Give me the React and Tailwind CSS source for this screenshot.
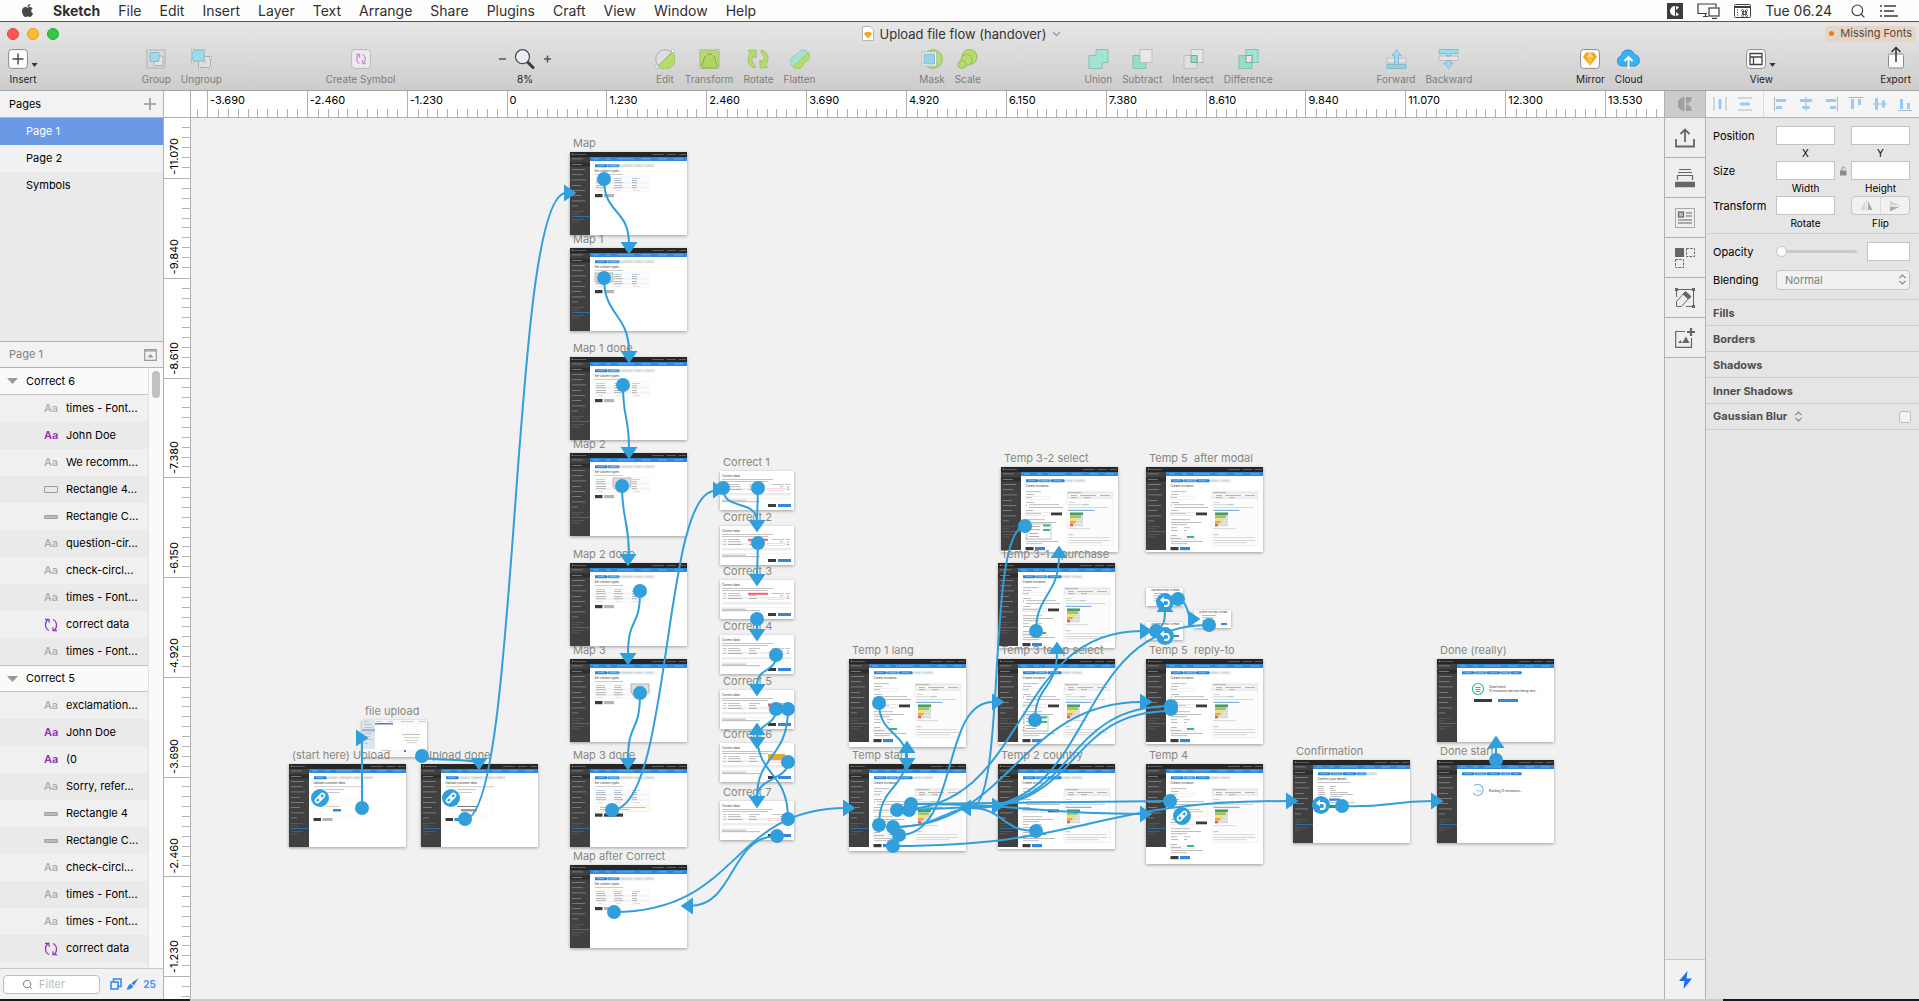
import React from "react";
import { Search } from "lucide-react";
import { FaApple } from "react-icons/fa";

const BLUE = "#319fdb";

/* ---------- menu bar ---------- */

const MENUS = ["File", "Edit", "Insert", "Layer", "Text", "Arrange", "Share", "Plugins", "Craft", "View", "Window", "Help"];

function MenuBar() {
  return (
    <header className="flex h-[22px] shrink-0 items-center justify-between border-b border-[#70454d] bg-[#fdfdfd] px-5 text-[14px] leading-5 text-[#2f2f2f]">
      <nav className="flex items-center gap-[18px]">
        <button aria-label="Apple menu"><FaApple size={15} color="#474747" /></button>
        <button className="font-bold">Sketch</button>
        {MENUS.map((m) => <button key={m}>{m}</button>)}
      </nav>
      <div className="flex items-center gap-3.5">
        <svg width="16" height="16" viewBox="0 0 16 16"><rect width="16" height="16" fill="#3d3d3d" /><path d="M8 3A5 5 0 0 0 8 13zM9 3a5 5 0 0 1 3 1.5L9 7zM9 13a5 5 0 0 0 3-1.5L9 9z" fill="#fff" /></svg>
        <svg width="23" height="16" viewBox="0 0 23 16" fill="none" stroke="#3d3d3d" strokeWidth="1.2"><path d="M10 10.500H1V1h18v3M6 13.500h5M8.500 10.500v3" /><rect x="12" y="5" width="10" height="8" fill="#fff" /><path d="M15 15.400h5" /></svg>
        <svg width="17" height="16" viewBox="0 0 17 16" fill="none" stroke="#3d3d3d"><rect x=".5" y="1.500" width="16" height="13" rx="1" /><path d="M.5 4h16" strokeWidth="2" /><path d="M3 7h2M3 9.500h2M3 12h2" strokeDasharray="1 1" /><path d="M8.500 8.500h4v3h-4zM8.500 8.500a1 1 0 1 1 1-1v5a1 1 0 1 1-1-1M12.500 8.500a1 1 0 1 0-1-1v5a1 1 0 1 0 1-1" strokeWidth=".8" /></svg>
        <span>Tue 06.24</span>
        <button aria-label="Search" className="pl-1"><Search size={16} strokeWidth={1.700} color="#3d3d3d" /></button>
        <svg width="19" height="14" viewBox="0 0 19 14" stroke="#3d3d3d" strokeWidth="1.600"><path d="M0 2h2M0 7h2M0 12h2M4 2h12M4 7h10M4 12h14" /></svg>
      </div>
    </header>
  );
}

/* ---------- toolbar ---------- */

const icon = {
  insert: <svg width="30" height="20" viewBox="0 0 30 20"><rect x=".6" y=".6" width="18.800" height="18.800" rx="3" fill="#fdfdfd" stroke="#8b8b8b" /><path d="M10 4.500v11M4.500 10h11" stroke="#444" strokeWidth="1.400" /><path d="M23.500 14h6l-3 4z" fill="#333" /></svg>,
  group: <svg width="20" height="20" viewBox="0 0 20 20"><rect x="1" y="1" width="18" height="18" fill="none" stroke="#b0b0b0" /><rect x="8" y="7" width="9" height="9.500" rx="1" fill="#e3e3e3" stroke="#b0b0b0" /><rect x="4" y="3.500" width="9" height="9" rx="1" fill="#9cdcea" stroke="#84b9c8" />{[0, 17].flatMap((x) => [0, 17].map((y) => <rect key={x + "-" + y} x={x + .5} y={y + .5} width="2" height="2" fill="#fff" stroke="#aaa" strokeWidth=".6" />))}</svg>,
  ungroup: <svg width="21" height="20" viewBox="0 0 21 20"><rect x="7.500" y="7.500" width="12" height="11" fill="#e0e0e0" stroke="#b0b0b0" /><rect x="1" y="1" width="12" height="11" fill="#9cdcea" stroke="#84b9c8" />{[[0, 0], [12, 0], [0, 11], [12, 11], [18, 7], [18, 17.500], [7, 17.500]].map(([x, y]) => <rect key={x + "-" + y} x={x + .3} y={y + .3} width="2" height="2" fill="#fff" stroke="#aaa" strokeWidth=".6" />)}</svg>,
  symbol: <svg width="20" height="20" viewBox="0 0 20 20"><rect x=".6" y=".6" width="18.800" height="18.800" rx="3" fill="#ebebeb" stroke="#b9b9b9" /><path d="M8.500 14.500C5.500 13.500 4.500 8.500 7.500 6M5 5.500h3.500V9M11.500 5.500c3 1 4 6 1 8.500M15 14.500h-3.500V11" fill="none" stroke="#d58ae0" strokeWidth="1.300" /></svg>,
  edit: <svg width="20" height="20" viewBox="0 0 20 20"><circle cx="10" cy="10" r="9.300" fill="#dedede" stroke="#aeaeae" /><path d="M17.500 3.500A9.500 9.500 0 1 1 3 17z" fill="#b6dc6a" stroke="#98bb59" strokeWidth=".7" /><path d="M2 18 17.500 2.500" stroke="#aaa" /><rect x="16.500" y=".8" width="2.500" height="2.500" fill="#fff" stroke="#aaa" strokeWidth=".6" /><rect x=".8" y="16.500" width="2.500" height="2.500" fill="#fff" stroke="#aaa" strokeWidth=".6" /></svg>,
  transform: <svg width="21" height="20" viewBox="0 0 21 20"><rect x="1" y="1" width="19" height="18" fill="#b6dc6a" stroke="#a5b887" /><path d="M2 19 6.500 5h8L19 19z" fill="#afd65f" stroke="#8aa35c" />{[[0, 0], [18.500, 0], [0, 17.500], [18.500, 17.500], [5, 4], [13.500, 4]].map(([x, y]) => <rect key={x + "-" + y} x={x + .3} y={y + .3} width="2" height="2" fill="#fff" stroke="#aaa" strokeWidth=".6" />)}</svg>,
  rotate: <svg width="24" height="20" viewBox="0 0 24 20" fill="#b6dc6a" stroke="#9ab95c" strokeWidth=".8"><path d="M10 1v8L7.500 7c-2.500 3-2 6 1.500 9.500V19C1 18 .5 8 4.500 4L2 1.500z" /><path d="M14 19v-8l2.500 2c2.500-3 2-6-1.500-9.500V1c8 1 8.500 11 4.500 15l2.500 2.500z" /></svg>,
  flatten: <svg width="20" height="20" viewBox="0 0 20 20" strokeWidth=".7"><path d="M12.500 1a6.300 6.300 0 0 1 5.800 9c-2 2.500-3.500 2-5.300 4.500a6.500 6.500 0 1 1-8-8C8 5.500 8 2 12.500 1z" fill="#a4e3d1" stroke="#83bdae" /><path d="M18.500 3.500a6.300 6.300 0 0 1-1 8c-2 1-3.500 1.500-4 4.500a6.400 6.400 0 0 1-10.500 1.500z" fill="#b6dc6a" stroke="#98bb59" /></svg>,
  mask: <svg width="22" height="20" viewBox="0 0 22 20"><circle cx="12" cy="10" r="9.300" fill="#b6dc6a" stroke="#98bb59" /><rect x="1" y="3" width="14.500" height="14" fill="#fff" stroke="#a9b6bb" strokeWidth=".8" /><rect x="3" y="5" width="10.500" height="10" fill="#93d4ea" stroke="#83b9c8" /></svg>,
  scale: <svg width="21" height="20" viewBox="0 0 21 20" fill="#b6dc6a" stroke="#98bb59"><circle cx="12.500" cy="8" r="7.500" /><circle cx="9.500" cy="11" r="5.500" /><circle cx="5" cy="15.500" r="4" /></svg>,
  union: <svg width="21" height="20" viewBox="0 0 21 20"><path d="M8 .5h12v13h-6v6H1v-13h7z" fill="#a3e5d5" stroke="#7fc2b0" /></svg>,
  subtract: <svg width="21" height="20" viewBox="0 0 21 20"><path d="M1 6.500h7v7h6v6H1z" fill="#95decb" stroke="#7fc2b0" /><rect x="8" y=".5" width="12" height="13" fill="#e8e8e8" stroke="#bdbdbd" /></svg>,
  intersect: <svg width="21" height="20" viewBox="0 0 21 20"><rect x="8" y=".5" width="12" height="13" fill="#e6e6e6" stroke="#bdbdbd" /><rect x="1" y="6.500" width="13" height="13" fill="#e0e0e0" stroke="#bdbdbd" /><rect x="8" y="6.500" width="6" height="7" fill="#95decb" stroke="#7fa398" /></svg>,
  difference: <svg width="21" height="20" viewBox="0 0 21 20"><rect x="8" y=".5" width="12" height="13" fill="#a3e5d5" stroke="#7fc2b0" /><rect x="1" y="6.500" width="13" height="13" fill="#95decb" stroke="#7fc2b0" /><rect x="8" y="6.500" width="6" height="7" fill="#e6e6e6" stroke="#7fa398" /></svg>,
  forward: <svg width="21" height="20" viewBox="0 0 21 20" strokeWidth=".8"><rect x="1" y="9" width="19" height="5" fill="#e4e4e4" stroke="#b4b4b4" /><rect x="1" y="15.500" width="19" height="4" fill="#8fd0e6" stroke="#7fb3c4" /><path d="M10.500.5 15 6.500h-2.500v9h-4v-9H6z" fill="#9adcef" stroke="#7fb3c4" /></svg>,
  backward: <svg width="21" height="20" viewBox="0 0 21 20" strokeWidth=".8"><rect x="1" y="7" width="19" height="4.500" fill="#e4e4e4" stroke="#b4b4b4" /><path d="M1 .5h19v4h-7.500V7h-4V4.500H1zM8.500 11.500h4V14H15l-4.500 5.500L6 14h2.500z" fill="#9adcef" stroke="#7fb3c4" /></svg>,
  mirror: <svg width="20" height="20" viewBox="0 0 20 20"><rect x=".6" y=".6" width="18.800" height="18.800" rx="3" fill="#fdfdfd" stroke="#8b8b8b" /><path d="M6 3.500h8l3 4.500-7 8.500L3 8z" fill="#f9a11b" /><path d="M6.500 8h7L10 16.500z" fill="#fcc02c" /><path d="M10 3.500 13.500 8h-7z" fill="#fde087" /></svg>,
  cloud: <svg width="25" height="20" viewBox="0 0 25 20"><path d="M6 17a5 5 0 0 1-1-9.800A7 7 0 0 1 18.500 5.500 6 6 0 0 1 19.500 17z" fill="#37b3f3" stroke="#1b86c4" strokeWidth=".8" /><path d="M12.500 20V8.500M8.500 12l4-4 4 4" fill="none" stroke="#fff" strokeWidth="1.800" /></svg>,
  view: <svg width="30" height="20" viewBox="0 0 30 20"><rect x=".6" y=".6" width="18.800" height="18.800" rx="3" fill="#fdfdfd" stroke="#8b8b8b" /><path d="M4 4.500h12v11H4zM4 8h12M7.500 8v7.500" fill="none" stroke="#444" strokeWidth="1.300" /><path d="M23.500 14h6l-3 4z" fill="#333" /></svg>,
  export: <svg width="18" height="23" viewBox="0 0 18 23"><rect x="1.500" y="8" width="15" height="14" rx="1.500" fill="#fbfbfb" stroke="#8b8b8b" /><path d="M9 16V2M4.500 6 9 1.500 13.500 6" fill="none" stroke="#333" strokeWidth="1.500" /></svg>,
  zoom: <svg width="52" height="20" viewBox="0 0 52 20"><path d="M0 10h7M45 10h7M48.500 6.500v7" stroke="#555" strokeWidth="1.600" /><path d="m28 12.500 6 6" stroke="#3b3b3b" strokeWidth="3" strokeLinecap="round" /><circle cx="23.500" cy="7.700" r="7" fill="#e9eef6" stroke="#4b4b4b" strokeWidth="1.200" /></svg>,
};

const TOOL_GROUPS = [
  [["insert", "Insert", true]],
  [["group", "Group"], ["ungroup", "Ungroup"]],
  [["symbol", "Create Symbol"]],
  [["zoom", "8%", true]],
  [["edit", "Edit"], ["transform", "Transform"], ["rotate", "Rotate"], ["flatten", "Flatten"]],
  [["mask", "Mask"], ["scale", "Scale"]],
  [["union", "Union"], ["subtract", "Subtract"], ["intersect", "Intersect"], ["difference", "Difference"]],
  [["forward", "Forward"], ["backward", "Backward"]],
  [["mirror", "Mirror", true], ["cloud", "Cloud", true]],
  [["view", "View", true]],
  [["export", "Export", true]],
];

function DocIcon() {
  return (
    <svg width="12" height="15" viewBox="0 0 12 15"><path d="M.5.5h7.500l3.500 3.500v10.500H.5z" fill="#fff" stroke="#b5b5b5" /><path d="M3.500 6h5l1.500 2-4 4.500L2 8z" fill="#f7a223" /></svg>
  );
}

function Toolbar() {
  return (
    <div className="flex h-[69px] shrink-0 flex-col border-b border-[#a3a3a3] bg-linear-to-b from-[#e7e7e7] to-[#cdcdcd]">
      <div className="grid h-[23px] grid-cols-[1fr_auto_1fr] items-center pl-[7px] pr-[3px]">
        <div className="flex gap-2">
          <button aria-label="Close" className="size-3 rounded-full border border-[#e0443e] bg-[#fc5753]" />
          <button aria-label="Minimise" className="size-3 rounded-full border border-[#dea123] bg-[#fdbc2f]" />
          <button aria-label="Zoom window" className="size-3 rounded-full border border-[#2ca734] bg-[#33c748]" />
        </div>
        <h1 className="flex items-center gap-1.5 text-[13px] leading-4 text-[#333]">
          <DocIcon />
          Upload file flow (handover)
          <svg width="9" height="6" viewBox="0 0 9 6" fill="none" stroke="#999" strokeWidth="1.300"><path d="m1 1 3.500 3.500L8 1" /></svg>
        </h1>
        <button className="flex h-4 items-center gap-1.5 justify-self-end rounded-sm bg-[#e6d5c6] px-1 text-[11px] text-[#5a4a3e]">
          <span className="size-[5px] rounded-full bg-[#f77b0b]" />
          Missing Fonts
        </button>
      </div>
      <div className="flex flex-1 justify-between px-2">
        {TOOL_GROUPS.map((g) => (
          <div key={g[0][0]} className="flex gap-[10px]">
            {g.map(([id, label, on]) => (
              <button key={id} className={on ? "flex flex-col items-center gap-[3px] text-[#1c1c1c]" : "flex flex-col items-center gap-[3px] text-[#7d7d7d]"}>
                <span className="flex h-6 items-end">{icon[id]}</span>
                <span className="text-[10px] leading-[14px] whitespace-nowrap">{label}</span>
              </button>
            ))}
          </div>
        ))}
      </div>
    </div>
  );
}

/* ---------- left sidebar ---------- */

const LAYERS = [
  { title: "Correct 6", rows: [["aa", "times - Font..."], ["AA", "John Doe"], ["aa", "We recomm..."], ["box", "Rectangle 4..."], ["bar", "Rectangle C..."], ["aa", "question-cir..."], ["aa", "check-circl..."], ["aa", "times - Font..."], ["sym", "correct data"], ["aa", "times - Font..."]] },
  { title: "Correct 5", rows: [["aa", "exclamation..."], ["AA", "John Doe"], ["AA", "(0"], ["aa", "Sorry, refer..."], ["bar", "Rectangle 4"], ["bar", "Rectangle C..."], ["aa", "check-circl..."], ["aa", "times - Font..."], ["aa", "times - Font..."], ["sym", "correct data"], ["aa", ""]] },
];

function LayerIcon({ kind }) {
  if (kind === "aa") return <span className="w-[15px] font-medium text-[#a9a9a9]">Aa</span>;
  if (kind === "AA") return <span className="w-[15px] font-semibold text-[#9130b8]">Aa</span>;
  if (kind === "box") return <span className="h-[7px] w-[14px] rounded-[1px] border border-[#999]" />;
  if (kind === "bar") return <span className="h-[4px] w-[14px] rounded-[1px] border border-[#a2a2a2] bg-[#bbb]" />;
  return (
    <svg width="14" height="14" viewBox="0 0 14 14" fill="none" stroke="#9130b8" strokeWidth="1.200"><path d="M5 12.500C.5 10.500.5 4 4 1.500M1 1.300h4v3.500M9 1.500c4.500 2 4.500 8.500 1 11M13 12.700H9V9.200" /></svg>
  );
}

function Sidebar() {
  return (
    <aside className="flex w-[164px] shrink-0 flex-col border-r border-[#b2b2b2] bg-[#ebebeb] text-[11px] text-black">
      <div className="flex h-[27px] shrink-0 items-center justify-between border-b border-[#b2b2b2] bg-[#f2f2f2] pl-[9px] pr-[7px]">
        <h2>Pages</h2>
        <button aria-label="Add page"><svg width="12" height="12" viewBox="0 0 12 12" stroke="#999" strokeWidth="1.600"><path d="M6 0v12M0 6h12" /></svg></button>
      </div>
      <div className="flex h-[223px] shrink-0 flex-col">
        <button className="h-[27px] bg-[#6a99e5] pl-[26px] text-left text-white">Page 1</button>
        <button className="h-[27px] bg-[#f1f1f1] pl-[26px] text-left">Page 2</button>
        <button className="h-[27px] bg-[#eaeaea] pl-[26px] text-left">Symbols</button>
      </div>
      <div className="flex h-[27px] shrink-0 items-center justify-between border-y border-[#b2b2b2] bg-[#f2f2f2] pl-[9px] pr-[6px] text-[#808080]">
        <h2>Page 1</h2>
        <button aria-label="Collapse pages"><svg width="13" height="12" viewBox="0 0 13 12"><path d="M.7.700h11.600v10.600H.7zM.7 2h11.600" fill="none" stroke="#999" strokeWidth="1.200" /><path d="M3.500 8.500h6l-3-3.500z" fill="#999" /></svg></button>
      </div>
      <div className="flex min-h-0 flex-1">
        <div className="min-w-0 flex-1 overflow-hidden">
          {LAYERS.map((group, gi) => (
            <section key={group.title}>
              <button className={gi ? "flex h-[27px] w-full items-center gap-2 border-y border-[#c2c2c2] bg-[#fafafa] pl-[7px]" : "flex h-[27px] w-full items-center gap-2 border-b border-[#c2c2c2] bg-[#fafafa] pl-[7px]"}>
                <svg width="11" height="6" viewBox="0 0 11 6"><path d="M0 0h11L5.500 6z" fill="#999" /></svg>
                {group.title}
              </button>
              <ul>
                {group.rows.map(([kind, name], i) => (
                  <li key={i} className="flex h-[27px] items-center gap-2 pl-11 whitespace-nowrap odd:bg-[#f0f0f0] even:bg-[#eaeaea]">
                    <span className="flex w-[14px] items-center">{name && <LayerIcon kind={kind} />}</span>
                    {name}
                  </li>
                ))}
              </ul>
            </section>
          ))}
        </div>
        <div className="w-[15px] border-l border-[#e2e2e2] bg-[#fafafa] px-[3px] pt-[3px]">
          <div className="h-[27px] w-2 rounded-full bg-[#c1c1c1]" />
        </div>
      </div>
      <div className="flex h-[31px] shrink-0 items-center justify-between border-t border-[#c9c9c9] bg-[#f2f2f2] pl-[3px] pr-[7px]">
        <label className="flex h-[19px] w-[97px] items-center gap-1.5 rounded-[4px] border border-[#bdbdbd] bg-white pl-[18px]">
          <Search size={11} strokeWidth={2} color="#777" className="shrink-0" />
          <input aria-label="Filter layers" placeholder="Filter" className="w-full min-w-0 bg-transparent text-[11px] outline-none placeholder:text-[#bcbcbc]" />
        </label>
        <span className="flex items-center gap-1 text-[10px] font-bold text-[#4a93f0]">
          <svg width="12" height="12" viewBox="0 0 12 12" fill="none" stroke="#2f86ee" strokeWidth="1.500"><path d="M1 4h7v7H1zM3.500 3.500V1H11v7.500H8.500" /></svg>
          <svg width="13" height="12" viewBox="0 0 13 12" fill="#2f86ee"><path d="M12.500 0 8 7.500 5.500 5zM4.800 5.800l2.500 2.500C6 11 3 11.500.3 11.700 2 10 2 6.500 4.800 5.800z" /></svg>
          25
        </span>
      </div>
    </aside>
  );
}

/* ---------- rulers ---------- */

const H_LABELS = ["-3.690", "-2.460", "-1.230", "0", "1.230", "2.460", "3.690", "4.920", "6.150", "7.380", "8.610", "9.840", "11.070", "12.300", "13.530"];
const V_LABELS = ["-11.070", "-9.840", "-8.610", "-7.380", "-6.150", "-4.920", "-3.690", "-2.460", "-1.230", ""];

function TopRuler() {
  return (
    <div className="flex h-[27px] border-b border-[#b2b2b2] bg-white text-[11px] leading-3 text-black">
      <div className="flex w-[16px] shrink-0 items-end">
        <div className="ml-[6px] h-2 w-[10px] border-l border-[#b2b2b2]" />
      </div>
      {H_LABELS.map((t, i) => {
        const last = i === H_LABELS.length - 1;
        return (
          <div key={t} className={last ? "flex w-[59px] shrink-0 flex-col justify-between overflow-hidden border-l border-[#b2b2b2]" : "flex min-w-0 flex-1 flex-col justify-between border-l border-[#b2b2b2]"}>
            <span className="pl-[2px] pt-[3px]">{t}</span>
            <div className={last ? "grid h-2 w-[100px] shrink-0 grid-cols-10" : "grid h-2 grid-cols-10"}>
              {Array.from({ length: 10 }, (_, k) => <i key={k} className={k ? "border-l border-[#b2b2b2]" : ""} />)}
            </div>
          </div>
        );
      })}
    </div>
  );
}

function SideRuler() {
  return (
    <div className="flex w-[27px] shrink-0 flex-col border-r border-[#b2b2b2] bg-white text-[11px] leading-3 text-black">
      {V_LABELS.map((t, i) => {
        const first = i === 0;
        const last = i === V_LABELS.length - 1;
        return (
          <div key={i} className={first ? "flex h-[61px] shrink-0 items-end justify-between overflow-hidden border-b border-[#b2b2b2]" : last ? "flex h-[22px] shrink-0 items-start justify-between overflow-hidden" : "flex min-h-0 flex-1 items-end justify-between border-b border-[#b2b2b2]"}>
            <span className="rotate-180 pt-[3px] pr-1 whitespace-nowrap [writing-mode:vertical-rl]">{t}</span>
            <div className={first || last ? "grid h-[100px] w-2 shrink-0 grid-rows-10" : "grid h-full w-2 grid-rows-10"}>
              {Array.from({ length: 10 }, (_, k) => <i key={k} className={k < 9 ? "border-b border-[#b2b2b2]" : ""} />)}
            </div>
          </div>
        );
      })}
    </div>
  );
}

/* ---------- artboard thumbnails ---------- */

function Lines({ data, fill }) {
  return data.map(([x, y, w, h = 0.8], i) => <rect key={i} x={x} y={y} width={w} height={h} fill={fill} />);
}

function Shell({ blueSteps, children }) {
  const steps = [[25, 12], [38, 11], [50, 13], [64, 9], [74, 10]];
  return (
    <>
      <rect width="117" height="5" fill="#262626" />
      <circle cx="2.500" cy="2.300" r=".8" fill="#d99a3a" />
      <Lines fill="#6c6c6c" data={[[4, 2, 7], [11, 2, 5], [82, 2, 12], [97, 2, 9], [109, 2, 7]]} />
      <rect y="5" width="20" height="78" fill="#404040" />
      <rect y="10.500" width="20" height="4" fill="#2d2d2d" />
      <Lines fill="#888" data={[[2, 6.500, 11], [2, 12, 10], [2, 17, 13], [2, 22.300, 11], [2, 27.500, 14], [2, 33, 9], [2, 38, 13], [2, 43, 9], [2, 48.500, 13], [2, 53.500, 6]]} />
      <Lines fill="#5c5c5c" data={[[2, 59, 12], [2, 61.500, 7], [2, 67, 12], [2, 69.500, 7]]} />
      <rect x="2" y="64" width="18" height="1" fill="#2f6ea8" />
      <rect x="20" y="5" width="97" height="4" fill="#2f88db" />
      <Lines fill="#7db5ec" data={[[23, 6.500, 6], [36, 6.500, 5], [47, 6.500, 17], [71, 6.500, 10], [88, 6.500, 9], [104, 6.500, 9]]} />
      {steps.map(([x, w], i) => (
        <g key={x}>
          <path d={`M${x} 12.300h${w}l1 1.500-1 1.500h-${w}z`} fill={i < blueSteps ? (i % 2 ? "#479be6" : "#2b84d9") : "#dfe3e6"} />
          <rect x={x + 2.500} y="13.400" width={w - 5} height=".7" fill={i < blueSteps ? "#8fc2f0" : "#c6cacd"} />
        </g>
      ))}
      {children}
    </>
  );
}

function Title({ y = 20, children }) {
  return <text x="24.500" y={y} fontSize="3" fontFamily="Inter, sans-serif" fill="#333">{children}</text>;
}

function MapBoard({ selected, notice }) {
  return (
    <Shell blueSteps={2}>
      <Title>Set column types</Title>
      <Lines fill="#aaa" data={[[25, 22, 28, .6]]} />
      <rect x="25" y="24.500" width="55" height="15" fill="#fdfdfd" stroke="#f0f0f0" strokeWidth=".4" />
      <rect x="25" y="29.500" width="55" height="2.400" fill="#f4f4f4" />
      <rect x="25" y="34.500" width="55" height="2.400" fill="#f4f4f4" />
      <Lines fill="#83bbec" data={[[26, 26, 9, .6], [44, 26, 8, .6], [62, 26, 8, .6]]} />
      <Lines fill="#8a8a8a" data={[[26, 28.300, 9, .6], [44, 28.300, 7, .6], [62, 28.300, 5, .6], [26, 30.500, 10, .6], [44, 30.500, 9, .6], [62, 30.500, 5, .6], [26, 33, 10, .6], [44, 33, 8, .6], [62, 33, 5, .6], [26, 35.500, 10, .6], [44, 35.500, 9, .6], [62, 35.500, 5, .6]]} />
      <Lines fill="#ccc" data={[[28, 38, 5, .6], [46, 38, 5, .6], [63, 38, 7, .6]]} />
      {selected && <rect x={selected} y="25" width="18" height="9" fill="#ddd" stroke="#999" strokeWidth=".6" />}
      {notice && <><rect x="25" y="41.500" width="55" height="6" fill="#fffdf3" stroke="#f4e2b5" strokeWidth=".4" /><Lines fill="#a09677" data={[[30, 43, 46, .6], [30, 45, 30, .6]]} /></>}
      <rect x="25" y={notice ? 49.5 : 42} width="7.500" height="3.200" fill="#3b3b3b" />
      <rect x="34" y={notice ? 49.5 : 42} width={notice ? 19 : 10} height="3.200" fill={notice ? "#3b3b3b" : "#b3b3b3"} />
    </Shell>
  );
}

function UploadBoard({ done }) {
  return (
    <Shell blueSteps={1}>
      <Title>Upload customer data</Title>
      <Lines fill="#aaa" data={[[25, 22.500, 48, .6], [25, 28, 26, .6]]} />
      <Lines fill="#69abe5" data={[[36, 25, 19, .6]]} />
      <rect x="25" y="36" width="47" height="16" fill="#fff" stroke="#eee" strokeWidth=".5" />
      <Lines fill={done ? "#555" : "#c5c5c5"} data={[[36, 42, done ? 20 : 15]]} />
      <rect x={done ? 40 : 44} y="45" width={done ? 16 : 8} height="2.500" fill={done ? "#999" : "#3288dc"} />
      <rect x="24.500" y="54" width="7.500" height="3" fill="#3b3b3b" />
      <rect x="33.500" y="54" width="10" height="3" fill={done ? "#3288dc" : "#b3b3b3"} />
    </Shell>
  );
}

/* colour, top edge, coloured width of each rating bar */
const RATING = [["#4a9d62", 45.500, 13], ["#97c766", 48.300, 11], ["#f1e26a", 51.100, 8], ["#f0a155", 53.900, 5.500], ["#e2605a", 56.700, 3]];

function TempBoard({ shift = 0, menu }) {
  return (
    <Shell blueSteps={3}>
      <Title>Create invitation</Title>
      <Lines fill="#909090" data={[[25, 24.500, 15, .6], [25, 27, 8, .6], [25, 30.500, 6, .6], [25, 35, 8, .6], [28, 37.500, 30, .6], [28, 40, 34, .6]]} />
      <rect x="24.500" y="29.500" width="24" height="2.800" fill="none" stroke="#ddd" strokeWidth=".4" />
      <circle cx="25.500" cy="38" r=".6" fill="#2f88db" />
      {shift > 0 && <><rect x="24.500" y="43" width="37" height="10" fill="#fffdf3" stroke="#f0e5c5" strokeWidth=".4" /><Lines fill="#aaa" data={[[28, 45, 26, .6], [28, 47.500, 29, .6], [28, 50, 16, .6]]} /></>}
      <g transform={`translate(0 ${shift})`}>
        <Lines fill="#909090" data={[[25, 43, 7, .6], [25, 46.500, 15, .6], [25, 52.500, 19, .6], [25, 55, 30, .6], [25, 57.500, 16, .6], [25, 60.500, 6, .6], [38, 60.500, 6, .6], [25, 63, 7, .6], [38, 63, 3, .6], [25, 68, 6, .6], [25, 71, 10, .6], [25, 74, 32, .6], [25, 76.500, 16, .6]]} />
        <rect x="24.500" y="45.500" width="24" height="2.800" fill="none" stroke="#ccc" strokeWidth=".4" />
        <rect x="50" y="45.500" width="11" height="2.800" fill="#3b3b3b" />
        <rect x="24.500" y="70" width="25" height="2.800" fill="none" stroke="#ccc" strokeWidth=".4" />
        <rect x="41" y="69" width="7" height="2" fill="#2bbd87" />
        <rect x="24.500" y="80" width="8" height="3.200" fill="#3b3b3b" />
        <rect x="34" y="80" width="10" height="3.200" fill="#3288dc" />
      </g>
      {menu && <g><rect x="26" y="57" width="24" height="15" fill="#fff" stroke="#888" strokeWidth=".5" /><Lines fill="#777" data={[[28, 59, 11, .6], [28, 62.500, 11, .6], [28, 66, 9, .6], [28, 69, 10, .6]]} /><rect x="42" y="57.500" width="7" height="2" fill="#2bbd87" /><rect x="42" y="62" width="7" height="2" fill="#2bbd87" /></g>}
      <rect x="66" y="24.500" width="46" height="54" fill="#fcfcfc" stroke="#e6e6e6" strokeWidth=".5" />
      <rect x="66" y="24.500" width="46" height="7.500" fill="#ececec" />
      <rect x="67.500" y="27" width="43" height="2.500" fill="#f8f8f8" />
      <Lines fill="#8a8a8a" data={[[67, 25.500, 13, .6], [70, 28, 6, .6], [79, 28, 16, .6], [99, 28, 10, .6], [70, 30.500, 6, .6], [83, 30.500, 6, .6]]} />
      <Lines fill="#bdbdbd" data={[[67.500, 35, 6, .6], [67.500, 37.500, 13, .6], [67.500, 40, 40, .6], [67.500, 61.500, 22, .6], [67.500, 70.500, 41, .6], [67.500, 73, 42, .6], [67.500, 75.500, 33, .6]]} />
      <Lines fill="#6f9edb" data={[[81, 37.500, 7, .6], [67.500, 42.800, 26, 1], [67.500, 67.500, 5, .6]]} />
      {RATING.map(([c, y, w]) => <g key={y}><rect x="69" y={y} width="13" height="2.600" fill="#dcdcdc" /><rect x="69" y={y} width={w} height="2.600" fill={c} /></g>)}
    </Shell>
  );
}

function CorrectBoard({ mark }) {
  return (
    <>
      <text x="2" y="6" fontSize="3" fontFamily="Inter, sans-serif" fill="#333">Correct data</text>
      <Lines fill="#9d9d9d" data={[[2, 8.300, 51, .6], [2, 10.200, 46, .6], [3, 13, 4, .6], [8, 13, 12, .6], [29, 13, 11, .6], [52, 13, 12, .6], [65, 13, 5, .6]]} />
      <rect x="2" y="17" width="69" height="2.300" fill="#f0f0f0" />
      <Lines fill="#888" data={[[8, 15.500, 13, .6], [29, 15.500, 7, .6], [60, 15.500, 3, .6], [8, 18, 14, .6], [29, 18, 8, .6]]} />
      <Lines fill="#e98e96" data={[[3, 15.500, 3, .6], [3, 18, 3, .6], [67, 15.500, 2, 1], [67, 18, 2, 1]]} />
      <rect x="48" y="17.200" width="16" height="2" fill="#fff" stroke="#f0a8ae" strokeWidth=".4" />
      {mark === "header" && <rect x="28" y="12.800" width="20" height="2" fill="#f25f70" />}
      {mark === "cell" && <rect x="48" y="13.500" width="14" height="3" fill="#f25f70" />}
      {mark === "warn" && <rect x="48" y="11" width="17" height="6" fill="#e9ab2d" />}
      <rect x="2" y="22" width="69" height="2.400" fill="#ececec" />
      <rect x="2" y="27" width="69" height=".4" fill="#ddd" />
      <Lines fill="#888" data={[[2, 28.800, 24, .6], [2, 30.500, 38, .6]]} />
      <rect x="48" y="33" width="8" height="3" fill="#3b3b3b" />
      <rect x="58" y="33" width="13" height="3" fill="#3288dc" />
    </>
  );
}

function FinderBoard() {
  return (
    <>
      <rect width="65" height="37" fill="#f8f8f8" />
      <rect width="13" height="29" fill="#dce6ee" />
      <rect x="13" y="4" width="52" height="25" fill="#fff" />
      <Lines fill="#b0b0b0" data={[[2, 1, 5, .6], [14, 1, 6, .6], [26, 1, 5, .6], [39, 1, 12, .6], [57, 1, 7, .6], [2, 4, 8, .6], [2, 7, 9, .6], [2, 13, 8, .6], [2, 16, 6, .6], [2, 19, 9, .6], [2, 23, 4, .6], [40, 14, 18], [42, 17.500, 15, .6], [42, 20, 14, .6], [45, 22.500, 10, .6], [20, 30, 9, .6]]} />
      <rect x="13" y="3" width="18" height="1.500" fill="#4f78d6" />
      <rect y="9" width="13" height="2.500" fill="#a3b5cf" />
      <rect x="42" y="30" width="2" height="2" fill="#4f78d6" />
      <path d="M45 5h6l3 3v5h-9z" fill="#fff" stroke="#e5e5e5" strokeWidth=".4" />
    </>
  );
}

function DialogBoard({ title }) {
  return (
    <>
      <text x="5" y="3.200" fontSize="2.200" fontFamily="Inter, sans-serif" fill="#333">{title}</text>
      <Lines fill="#999" data={[[8, 5, 14, .7], [8, 7.500, 12, .7], [8, 10, 13, .7], [8, 12.500, 6, .7]]} />
      <rect x="27" y="13" width="6" height="2" fill="#3288dc" />
    </>
  );
}

function ConfirmBoard() {
  return (
    <Shell blueSteps={4}>
      <Title>Confirm your details</Title>
      <Lines fill="#999" data={[[25, 22.300, 32, .6], [25, 26, 6, .6], [37, 26, 6, .6], [25, 28, 6, .6], [37, 28, 4, .6], [25, 30, 6, .6], [37, 30, 6, .6], [25, 32, 7, .6], [37, 32, 18, .6], [25, 34, 8, .6], [37, 34, 23, .6], [37, 36, 12, .6], [25, 42.500, 37, .6]]} />
      <rect x="36" y="38.500" width="11" height="2.300" fill="#3288dc" />
      <rect x="36" y="45" width="12" height="3" fill="#12a35a" />
    </Shell>
  );
}

function BuildingBoard() {
  return (
    <Shell blueSteps={5}>
      <path d="M37 25.800a5.500 5.500 0 1 1-1 7" fill="none" stroke="#7db7ea" strokeWidth="1.200" />
      <text x="39" y="31.500" fontSize="2.500" fontFamily="Inter, sans-serif" fill="#2f88db">75%</text>
      <text x="52" y="31.500" fontSize="3" fontFamily="Inter, sans-serif" fill="#333">Building 10 invitations...</text>
    </Shell>
  );
}

function DoneBoard() {
  return (
    <Shell blueSteps={5}>
      <circle cx="41" cy="30" r="5.500" fill="none" stroke="#2bbd87" strokeWidth="1.200" />
      <path d="M38.500 28.500h5M38.500 30.500h5M38.500 32.500h5" stroke="#2bbd87" />
      <text x="52" y="28.500" fontSize="3" fontFamily="Inter, sans-serif" fill="#333">Good news!</text>
      <text x="52" y="32.500" fontSize="3" fontFamily="Inter, sans-serif" fill="#333">10 invitations are now being sent.</text>
      <rect x="37" y="40" width="18" height="3" fill="#3b3b3b" />
      <rect x="61" y="40" width="20" height="3" fill="#3288dc" />
    </Shell>
  );
}

/* ---------- canvas ---------- */

const ORIGIN = { x: 191, y: 118 };

const BOARDS = [
  ["file upload", 362, 720, 65, 37, <FinderBoard />],
  ["Map", 570, 152, 117, 83, <MapBoard />],
  ["Map 1", 570, 248, 117, 83, <MapBoard selected={25} />],
  ["Map 1 done", 570, 357, 117, 83, <MapBoard />],
  ["Map 2", 570, 453, 117, 83, <MapBoard selected={43} />],
  ["Map 2 done", 570, 563, 117, 83, <MapBoard />],
  ["Map 3", 570, 659, 117, 83, <MapBoard selected={61} />],
  ["Map 3 done", 570, 764, 117, 83, <MapBoard notice />],
  ["Map after Correct", 570, 865, 117, 83, <MapBoard />],
  ["(start here) Upload", 289, 764, 117, 83, <UploadBoard />],
  ["Upload done", 421, 764, 117, 83, <UploadBoard done />],
  ["Correct 1", 720, 471, 74, 39, <CorrectBoard />],
  ["Correct 2", 720, 526, 74, 39, <CorrectBoard mark="header" />],
  ["Correct 3", 720, 580, 74, 39, <CorrectBoard mark="header" />],
  ["Correct 4", 720, 635, 74, 39, <CorrectBoard />],
  ["Correct 5", 720, 690, 74, 39, <CorrectBoard mark="cell" />],
  ["Correct 6", 720, 743, 74, 39, <CorrectBoard mark="warn" />],
  ["Correct 7", 720, 801, 74, 39, <CorrectBoard />],
  ["Temp 1 lang", 849, 659, 117, 88, <TempBoard />],
  ["Temp start", 849, 764, 117, 87, <TempBoard />],
  ["Temp 3-2 select", 1001, 467, 117, 85, <TempBoard menu />],
  ["Temp 3-1 - purchase", 998, 563, 117, 85, <TempBoard />],
  ["Temp 3 temp select", 998, 659, 117, 85, <TempBoard menu />],
  ["Temp 2 country", 998, 764, 117, 85, <TempBoard />],
  ["Temp 5  after modal", 1146, 467, 117, 85, <TempBoard />],
  ["Temp 5  reply-to", 1146, 659, 117, 85, <TempBoard />],
  ["Temp 4", 1146, 764, 117, 100, <TempBoard shift={12} />],
  ["", 1146, 588, 37, 18, <DialogBoard title="Add/remove reply-to emails" />],
  ["", 1146, 622, 37, 18, <DialogBoard title="Add/remove reply-to emails" />],
  ["", 1194, 610, 37, 18, <DialogBoard title="Confirm your reply-to email" />],
  ["Confirmation", 1293, 760, 117, 83, <ConfirmBoard />],
  ["Done (really)", 1437, 659, 117, 83, <DoneBoard />],
  ["Done start", 1437, 760, 117, 83, <BuildingBoard />],
];

const LINKS = [
  "M604 179C604 215 629 208 629 244",
  "M604 278C604 316 629 314 629 352",
  "M623 385C623 420 629 415 629 449",
  "M622 486C622 520 629 520 629 556",
  "M640 591C640 630 628 615 628 655",
  "M640 693C640 735 628 720 628 760",
  "M612 810C672 810 662 491 715 491",
  "M465 819C520 819 510 193 566 193",
  "M362 808V738",
  "M422 758C445 761 475 758 479 764",
  "M614 912C740 912 730 808 846 808",
  "M777 836C730 836 735 906 690 906",
  "M723 488C723 512 757 498 757 522",
  "M758 488L757 522",
  "M758 543L757 576",
  "M757 619V632",
  "M776 655C776 674 757 666 757 686",
  "M776 709C776 727 757 722 757 740",
  "M788 709C788 758 757 755 757 797",
  "M788 762C788 780 757 778 757 797",
  "M788 819C788 770 757 778 757 733",
  "M879 703C879 735 907 732 907 760",
  "M879 825C879 785 907 790 907 752",
  "M893 846C1090 846 1090 801 1288 801",
  "M899 835C960 835 940 702 993 702",
  "M893 827C1010 827 1020 702 1142 702",
  "M893 827C940 827 940 810 972 808",
  "M897 810C1030 810 1010 631 1142 631",
  "M911 804L1170 801",
  "M911 804C1030 804 1030 814 1142 814",
  "M909 810L994 806",
  "M1025 526C985 530 1008 808 970 808",
  "M1036 631C1036 595 1059 595 1059 556",
  "M1035 720C1035 685 1057 690 1057 652",
  "M1171 706C1060 706 1080 808 970 808",
  "M1171 711C1064 711 1084 808 970 808",
  "M1209 625C1070 625 1100 808 970 808",
  "M1036 831C1000 831 1005 808 970 808",
  "M1156 631C1165 625 1165 620 1165 608",
  "M1178 599C1187 602 1186 608 1190 618",
  "M1342 806C1388 808 1388 801 1433 801",
  "M1496 760V746",
];

const DOTS = [[604, 179], [604, 278], [623, 385], [622, 486], [640, 591], [640, 693], [612, 810], [465, 819], [362, 808], [422, 756], [614, 912], [777, 836], [723, 488], [758, 488], [758, 543], [757, 619], [776, 655], [776, 709], [788, 709], [788, 762], [788, 819], [879, 703], [879, 825], [893, 827], [899, 835], [893, 846], [897, 810], [909, 810], [911, 804], [1025, 526], [1036, 631], [1035, 720], [1171, 706], [1171, 709], [1209, 625], [1036, 831], [1170, 801], [1156, 631], [1178, 599], [1342, 806], [1496, 760]];

/* arrow heads: tip x, tip y, direction in degrees (0 points right) */
const HEADS = [[629, 254, 90], [629, 363, 90], [629, 459, 90], [628, 566, 90], [628, 665, 90], [628, 770, 90], [725, 490, 0], [576, 193, 0], [368, 738, 0], [479, 770, 90], [855, 808, 0], [681, 906, 180], [757, 532, 90], [757, 586, 90], [757, 641, 90], [757, 696, 90], [757, 749, 90], [757, 723, -90], [757, 808, 90], [907, 770, 90], [907, 741, -90], [1298, 801, 0], [1004, 702, 0], [1152, 702, 0], [1152, 631, 0], [1152, 814, 0], [1004, 806, 0], [959, 808, 180], [1059, 546, -90], [1057, 642, -90], [1165, 600, -90], [1200, 619, 0], [1443, 801, 0], [1496, 736, -90]];

const BADGES = [[320, 798, "link"], [451, 798, "link"], [1182, 816, "link"], [1165, 602, "back"], [1165, 636, "back"], [1321, 805, "back"]];

function Connectors() {
  return (
    <svg className="absolute top-0 left-0" width="1473" height="881" viewBox="191 118 1473 881">
      <g fill="none" stroke={BLUE} strokeWidth="2">{LINKS.map((d) => <path key={d} d={d} />)}</g>
      <g fill={BLUE}>
        {DOTS.map(([x, y], i) => <circle key={i} cx={x} cy={y} r="7" />)}
        {HEADS.map(([x, y, a], i) => <path key={i} d="M.5 0-12-8.500V8.500z" transform={`translate(${x} ${y}) rotate(${a})`} />)}
      </g>
      {BADGES.map(([x, y, kind], i) => (
        <g key={i} transform={`translate(${x} ${y})`}>
          <circle r="9" fill={BLUE} />
          {kind === "link"
            ? <g transform="rotate(-45)" fill="none" stroke="#fff" strokeWidth="1.500"><rect x="-5.500" y="-2" width="6.500" height="4" rx="2" /><rect x="-1" y="-2" width="6.500" height="4" rx="2" /></g>
            : <g><path d="M-2-2H1a3 3 0 0 1 0 6H-1" fill="none" stroke="#fff" strokeWidth="1.800" /><path d="M-5-2-1-5.500v7z" fill="#fff" /></g>}
        </g>
      ))}
    </svg>
  );
}

function Canvas() {
  return (
    <main className="relative min-w-0 flex-1 overflow-hidden bg-[#f1f1f1]">
      {BOARDS.map(([name, x, y, w, h, art], i) => (
        <figure key={i} className="absolute" style={{ left: x - ORIGIN.x, top: y - ORIGIN.y, width: w }}>
          {name && <figcaption className="absolute bottom-full left-[3px] text-[11px] leading-[18px] whitespace-pre text-[#87877f]">{name}</figcaption>}
          <svg width={w} height={h} viewBox={`0 0 ${w} ${h}`} className="relative block bg-white shadow-[0_1px_3px_rgba(0,0,0,0.35)]">{art}</svg>
        </figure>
      ))}
      <Connectors />
    </main>
  );
}

/* ---------- right side ---------- */

const CRAFT = [
  <svg width="20" height="20" viewBox="0 0 20 20" fill="none" stroke="#666" strokeWidth="1.800"><path d="M1 11v7.500h18V11M10 14V1.500M5.500 6 10 1.500 14.500 6" /></svg>,
  <svg width="20" height="20" viewBox="0 0 20 20" fill="none" stroke="#666"><path d="M4 1.500h12M3 4.500h14M2.500 12V7.500h15V12" strokeWidth="1.200" /><path d="M0 16.500h20" strokeWidth="5.500" /></svg>,
  <svg width="20" height="20" viewBox="0 0 20 20" fill="none" stroke="#666"><rect x=".5" y=".5" width="19" height="19" strokeDasharray="1 1" /><rect x="3.500" y="4" width="5" height="5" fill="#bbb" strokeWidth="1.200" /><path d="M11 5h6M11 8h6M3 12h14M3 15h14" /></svg>,
  <svg width="20" height="20" viewBox="0 0 20 20" fill="none" stroke="#666"><rect x="0" y="0" width="9" height="9" fill="#666" stroke="none" /><rect x="11.500" y=".5" width="8" height="8" strokeDasharray="2.500 1.200" /><rect x=".5" y="11.500" width="8" height="8" strokeDasharray="2.500 1.200" /></svg>,
  <svg width="20" height="20" viewBox="0 0 20 20" fill="none" stroke="#666"><path d="M1.500 9V1.500H12M18.500 9v9.500H11M3 1.500h14M18.500 3v14" /><path d="M0 0h3v3H0zM17 0h3v3h-3zM17 17h3v3h-3z" fill="#666" stroke="none" /><path d="M1.500 18.500v-5L9 5l5.500 4.500-8 9z" /><path d="m8 6 2.500-2.500 5.500 5L13.500 11z" fill="#666" /></svg>,
  <svg width="20" height="20" viewBox="0 0 20 20" fill="none" stroke="#666"><path d="M10 3.500H.7v15.800h15.800V10" strokeWidth="1.200" /><path d="m3 15 2.500-3L7 15zM7 15l4-6.500L14.500 15z" fill="#666" stroke="none" /><path d="M16 0v8M12 4h8" strokeWidth="2.200" /></svg>,
];

function CraftBar() {
  return (
    <aside className="flex w-[42px] shrink-0 flex-col border-x border-[#b2b2b2] bg-[#ebebeb]">
      <button aria-label="Craft" className="flex h-[27px] items-center justify-center border-b border-[#b2b2b2] bg-[#cbcbcb]">
        <svg width="14" height="14" viewBox="0 0 14 14" fill="#a1a1a1"><path d="M6.500 0v14A7 7 0 0 1 6.500 0zM8 0h5.500v3.500L9.500 7 8 5.500zM8 14h5.500v-3.500L9.500 7 8 8.500z" /></svg>
      </button>
      {CRAFT.map((art, i) => <button key={i} aria-label={`Craft tool ${i + 1}`} className="flex h-10 items-center justify-center border-b border-[#b2b2b2] bg-[#eee]">{art}</button>)}
      <button aria-label="Sync" className="mt-auto flex h-10 items-center justify-center border-t border-[#c9c9c9] bg-[#f1f1f1]">
        <svg width="13" height="18" viewBox="0 0 13 18" fill="#1f6feb"><path d="M8.500 0 0 10h5.500L4.500 18 13 7.500H7.500z" /></svg>
      </button>
    </aside>
  );
}

function AlignIcon({ lines, bars }) {
  return (
    <button aria-label="Align" className="block">
      <svg width="14" height="14" viewBox="0 0 14 14"><path d={lines} stroke="#b5b5b5" fill="none" />{bars.map(([x, y, w, h], i) => <rect key={i} x={x} y={y} width={w} height={h} rx=".5" fill="#96cbfa" />)}</svg>
    </button>
  );
}

function Field({ label }) {
  return (
    <label className="flex flex-col items-center text-[10px] leading-4">
      <input className="h-[19px] w-full border border-[#c3c3c3] bg-white px-1 text-[11px]" />
      {label}
    </label>
  );
}

function UpDown() {
  return <svg width="7" height="11" viewBox="0 0 7 11" fill="none" stroke="#8a8a8a" strokeWidth="1.200"><path d="M.5 4 3.500 1l3 3M.5 7l3 3 3-3" /></svg>;
}

function Inspector() {
  return (
    <aside className="flex w-[213px] shrink-0 flex-col bg-[#e5e5e5] text-[11px] text-black">
      <div className="flex h-[27px] items-center justify-between border-b border-[#b2b2b2] bg-[#f5f5f5] px-[7px]">
        <AlignIcon lines="M1 0v14M13 0v14" bars={[[5.500, 2, 3, 10]]} />
        <AlignIcon lines="M0 1h14M0 13h14" bars={[[2, 5.500, 10, 3]]} />
        <span className="h-[26px] w-px bg-[#dcdcdc]" />
        <AlignIcon lines="M.5 0v14" bars={[[2, 2, 10, 3], [2, 9, 6, 3]]} />
        <AlignIcon lines="M7 0v14M0 7h0" bars={[[1, 2, 12, 3], [3.500, 9, 7, 3]]} />
        <AlignIcon lines="M13.500 0v14" bars={[[2, 2, 10, 3], [6, 9, 6, 3]]} />
        <AlignIcon lines="M0 .5h14" bars={[[2, 2, 3, 10], [9, 2, 3, 6]]} />
        <AlignIcon lines="M0 7h14" bars={[[2, 1, 3, 12], [9, 3.500, 3, 7]]} />
        <AlignIcon lines="M0 13.500h14" bars={[[2, 2, 3, 10], [9, 6, 3, 6]]} />
      </div>
      <div className="grid grid-cols-[63px_minmax(0,1fr)_16px_minmax(0,1fr)] border-b border-[#cdcdcd] pt-2 pr-[9px] pb-0.5 pl-[7px] [&>*]:h-[35px]">
        <span className="leading-5">Position</span><Field label="X" /><span /><Field label="Y" />
        <span className="leading-5">Size</span><Field label="Width" />
        <button aria-label="Lock proportions" className="flex items-start justify-center pt-[5px]"><svg width="7" height="10" viewBox="0 0 7 10"><rect y="4.500" width="6.500" height="5" fill="#8d8d8d" /><path d="M2 5V2.500a1.500 1.500 0 0 1 3 0V3" fill="none" stroke="#8d8d8d" /></svg></button>
        <Field label="Height" />
        <span className="leading-5">Transform</span><Field label="Rotate" /><span />
        <div className="flex flex-col items-center text-[10px] leading-4">
          <div className="flex h-[19px] w-full overflow-hidden rounded-[4px] border border-[#c6c6c6] bg-[#f1f1f1]">
            <button aria-label="Flip horizontally" className="flex flex-1 items-center justify-center border-r border-[#dcdcdc]"><svg width="13" height="11" viewBox="0 0 13 11"><path d="M5 1v9H.5z" fill="#d5d5d5" /><path d="M8 1v9h4.500z" fill="#a9a9a9" /><path d="M6.500 0v11" stroke="#ccc" strokeWidth=".7" /></svg></button>
            <button aria-label="Flip vertically" className="flex flex-1 items-center justify-center"><svg width="12" height="12" viewBox="0 0 12 12"><path d="M1 .5v4.500h9z" fill="#d5d5d5" /><path d="M1 11.500V7h9z" fill="#a9a9a9" /><path d="M0 6h12" stroke="#ccc" strokeWidth=".7" /></svg></button>
          </div>
          Flip
        </div>
      </div>
      <div className="grid grid-cols-[63px_minmax(0,1fr)] gap-y-2 border-b border-[#cdcdcd] pt-2 pr-[9px] pb-[9px] pl-[7px]">
        <label htmlFor="opacity" className="leading-5">Opacity</label>
        <div className="flex h-[19px] items-center gap-[10px]">
          <input id="opacity" type="range" defaultValue="0" className="h-3 w-0 min-w-0 flex-1 appearance-none bg-transparent [&::-webkit-slider-runnable-track]:h-[3px] [&::-webkit-slider-runnable-track]:rounded-full [&::-webkit-slider-runnable-track]:bg-[#cacaca] [&::-webkit-slider-thumb]:-mt-1 [&::-webkit-slider-thumb]:size-[11px] [&::-webkit-slider-thumb]:appearance-none [&::-webkit-slider-thumb]:rounded-full [&::-webkit-slider-thumb]:border [&::-webkit-slider-thumb]:border-[#c3c3c3] [&::-webkit-slider-thumb]:bg-[#fafafa]" />
          <input aria-label="Opacity value" className="h-[19px] w-[43px] shrink-0 border border-[#c3c3c3] bg-white px-1" />
        </div>
        <label htmlFor="blend" className="leading-5">Blending</label>
        <div className="relative">
          <select id="blend" className="h-5 w-full appearance-none rounded-[4px] border border-[#c6c6c6] bg-[#f1f1f1] pl-2 text-[11px] leading-4 text-[#808080]"><option>Normal</option></select>
          <span className="pointer-events-none absolute top-1 right-1"><UpDown /></span>
        </div>
      </div>
      {["Fills", "Borders", "Shadows", "Inner Shadows"].map((t) => (
        <h3 key={t} className="h-[26px] border-b border-[#cdcdcd] pl-[7px] leading-[26px] font-bold text-[#4f4f4f]">{t}</h3>
      ))}
      <div className="flex h-[26px] items-center gap-2 border-b border-[#cdcdcd] pr-2 pl-[7px] font-bold text-[#4f4f4f]">
        <label htmlFor="blur">Gaussian Blur</label>
        <UpDown />
        <input id="blur" type="checkbox" className="ml-auto size-3 appearance-none rounded-[3px] border border-[#bdbdbd] bg-[#f4f4f4]" />
      </div>
    </aside>
  );
}

export default function App() {
  return (
    <div className="flex h-screen flex-col overflow-hidden bg-[#cfcfcf] [font-family:Inter,'Liberation_Sans',sans-serif]">
      <MenuBar />
      <Toolbar />
      <div className="flex min-h-0 flex-1">
        <Sidebar />
        <div className="flex min-w-0 flex-1 flex-col">
          <div className="flex">
            <div className="h-[27px] w-[27px] shrink-0 border-r border-b border-[#b2b2b2] bg-white" />
            <div className="min-w-0 flex-1"><TopRuler /></div>
          </div>
          <div className="flex min-h-0 flex-1">
            <SideRuler />
            <Canvas />
          </div>
        </div>
        <CraftBar />
        <Inspector />
      </div>
      <div className="flex h-0.5 shrink-0">
        <div className="w-[190px] bg-[#1a1a1c]" />
        <div className="flex-1 bg-[#cbcbcb]" />
        <div className="w-[196px] bg-[#191722]" />
      </div>
    </div>
  );
}
